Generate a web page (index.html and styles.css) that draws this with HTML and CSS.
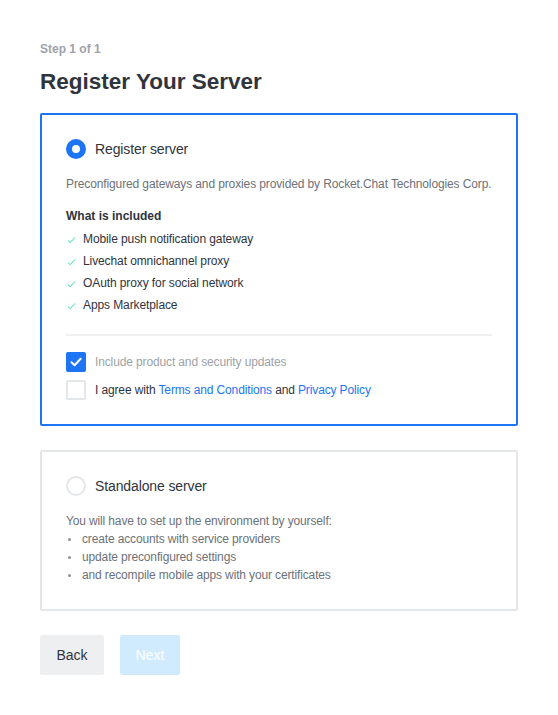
FILE: index.html
```html
<!DOCTYPE html>
<html>
<head>
<meta charset="utf-8">
<link rel="stylesheet" href="styles.css">
</head>
<body>
<div class="page">
  <div class="step">Step 1 of 1</div>
  <h1 class="title">Register Your Server</h1>

  <div class="card card-selected">
    <div class="option">
      <span class="radio radio-on"></span>
      <span class="option-label">Register server</span>
    </div>
    <p class="desc">Preconfigured gateways and proxies provided by Rocket.Chat Technologies Corp.</p>
    <div class="included">What is included</div>
    <ul class="checks">
      <li><svg class="tick" viewBox="0 0 10 8" width="9" height="8"><path d="M1 4.5 L3.6 7 L9 1" fill="none" stroke="#2de0a5" stroke-width="1.1"/></svg>Mobile push notification gateway</li>
      <li><svg class="tick" viewBox="0 0 10 8" width="9" height="8"><path d="M1 4.5 L3.6 7 L9 1" fill="none" stroke="#2de0a5" stroke-width="1.1"/></svg>Livechat omnichannel proxy</li>
      <li><svg class="tick" viewBox="0 0 10 8" width="9" height="8"><path d="M1 4.5 L3.6 7 L9 1" fill="none" stroke="#2de0a5" stroke-width="1.1"/></svg>OAuth proxy for social network</li>
      <li><svg class="tick" viewBox="0 0 10 8" width="9" height="8"><path d="M1 4.5 L3.6 7 L9 1" fill="none" stroke="#2de0a5" stroke-width="1.1"/></svg>Apps Marketplace</li>
    </ul>
    <div class="divider"></div>
    <div class="agree">
      <span class="checkbox checkbox-on"><svg viewBox="0 0 20 20" width="20" height="20"><path d="M5.5 10.2 L8.6 13.2 L14.6 6.8" fill="none" stroke="#fff" stroke-width="2" stroke-linecap="round" stroke-linejoin="round"/></svg></span>
      <span class="agree-text muted">Include product and security updates</span>
    </div>
    <div class="agree">
      <span class="checkbox"></span>
      <span class="agree-text">I agree with <a class="link">Terms and Conditions</a> and <a class="link">Privacy Policy</a></span>
    </div>
  </div>

  <div class="card">
    <div class="option">
      <span class="radio"></span>
      <span class="option-label">Standalone server</span>
    </div>
    <div class="standalone">
      <div>You will have to set up the environment by yourself:</div>
      <ul class="bullets">
        <li>create accounts with service providers</li>
        <li>update preconfigured settings</li>
        <li>and recompile mobile apps with your certificates</li>
      </ul>
    </div>
  </div>

  <div class="actions">
    <button class="btn btn-back">Back</button>
    <button class="btn btn-next">Next</button>
  </div>
</div>
</body>
</html>
```

FILE: styles.css
```css
* { box-sizing: border-box; }
html, body { margin: 0; padding: 0; background: #fff; }
body {
  font-family: "Liberation Sans", Arial, sans-serif;
  color: #2f343d;
}
.page {
  padding: 41px 40px 0 40px;
}
.step {
  font-size: 12px;
  line-height: 16px;
  font-weight: 700;
  color: #9ea2a8;
}
.title {
  margin: 9px 0 15px 0;
  font-size: 22.5px;
  line-height: 32px;
  font-weight: 700;
  color: #2f343d;
}
.card {
  border: 2px solid #e4e7ea;
  border-radius: 2px;
  padding: 24px;
  margin-bottom: 24px;
}
.card-selected {
  border-color: #1d74f5;
}
.option {
  display: flex;
  align-items: center;
  gap: 9px;
  height: 20px;
}
.radio {
  width: 20px;
  height: 20px;
  border-radius: 50%;
  border: 2px solid #e4e7ea;
  flex: none;
  display: flex;
  align-items: center;
  justify-content: center;
}
.radio-on {
  border: none;
  background: #1d74f5;
}
.radio-on::after {
  content: "";
  width: 8px;
  height: 8px;
  border-radius: 50%;
  background: #fff;
}
.option-label {
  font-size: 14px;
  line-height: 20px;
  letter-spacing: -0.12px;
  color: #2f343d;
}
.desc {
  margin: 17px 0 0 0;
  font-size: 12px;
  line-height: 16px;
  letter-spacing: -0.12px;
  white-space: nowrap;
  color: #6c727a;
}
.included {
  margin-top: 16px;
  font-size: 12px;
  line-height: 16px;
  font-weight: 700;
  color: #2f343d;
}
.checks {
  list-style: none;
  margin: 4px 0 0 0;
  padding: 0;
}
.checks li {
  display: flex;
  align-items: center;
  font-size: 12px;
  line-height: 22px;
  letter-spacing: -0.1px;
  color: #2f343d;
}
.tick {
  margin: 2px 7px 0 1px;
  flex: none;
}
.divider {
  margin: 18px 0 16px 0;
  height: 2px;
  background: #eef0f2;
}
.agree {
  display: flex;
  align-items: center;
  gap: 9px;
  margin-bottom: 8px;
}
.agree:last-child { margin-bottom: 0; }
.checkbox {
  width: 20px;
  height: 20px;
  border: 2px solid #e4e7ea;
  border-radius: 2px;
  flex: none;
  display: flex;
  align-items: center;
  justify-content: center;
}
.checkbox-on {
  border: none;
  background: #1d74f5;
}
.agree-text {
  font-size: 12px;
  line-height: 16px;
  letter-spacing: -0.13px;
  color: #2f343d;
}
.muted { color: #9ea2a8; }
.link { color: #1d74f5; text-decoration: none; }
.standalone {
  margin-top: 16px;
  font-size: 12px;
  line-height: 18px;
  letter-spacing: -0.14px;
  color: #6c727a;
}
.bullets {
  margin: 0 0 1px 0;
  padding: 0 0 0 16px;
  list-style: none;
}
.bullets li {
  position: relative;
}
.bullets li::before {
  content: "";
  position: absolute;
  left: -14px;
  top: 8px;
  width: 3px;
  height: 3px;
  border-radius: 50%;
  background: #8e9299;
}
.actions {
  display: flex;
  gap: 16px;
  margin-top: 1px;
}
.btn {
  height: 40px;
  padding: 0 14px;
  border: none;
  border-radius: 2px;
  font-family: inherit;
  font-size: 14px;
}
.btn-back {
  background: #eeeff1;
  color: #2f343d;
  width: 64px;
}
.btn-next {
  background: #d1ebfe;
  color: #fff;
  width: 60px;
}
```
